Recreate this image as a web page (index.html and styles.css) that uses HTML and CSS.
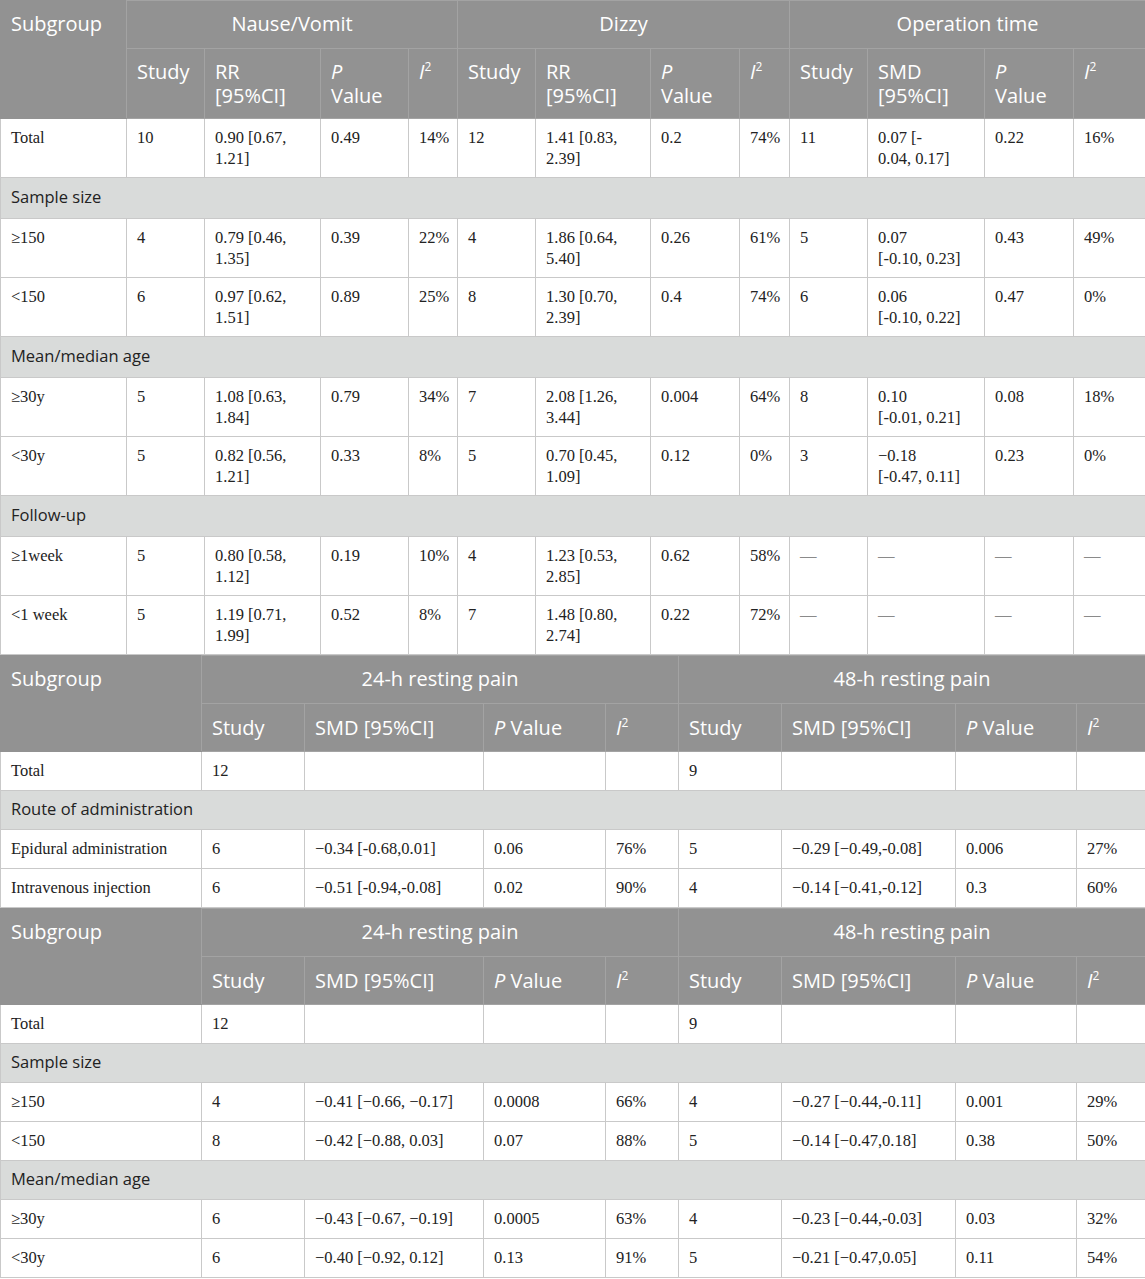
FILE: index.html
```html
<!DOCTYPE html>
<html>
<head>
<meta charset="utf-8">
<link rel="stylesheet" href="styles.css">
</head>
<body>
<table class="tbl t1">
  <colgroup>
    <col style="width:126px"><col style="width:78px"><col style="width:116px"><col style="width:88px"><col style="width:49px">
    <col style="width:78px"><col style="width:115px"><col style="width:89px"><col style="width:50px">
    <col style="width:78px"><col style="width:117px"><col style="width:89px"><col style="width:72px">
  </colgroup>
  <thead>
    <tr class="h1">
      <th rowspan="2" class="sg">Subgroup</th>
      <th colspan="4" class="grp">Nause/Vomit</th>
      <th colspan="4" class="grp">Dizzy</th>
      <th colspan="4" class="grp">Operation time</th>
    </tr>
    <tr class="h2">
      <th>Study</th><th>RR<br>[95%CI]</th><th><i>P</i><br>Value</th><th><i>I</i><sup>2</sup></th>
      <th>Study</th><th>RR<br>[95%CI]</th><th><i>P</i><br>Value</th><th><i>I</i><sup>2</sup></th>
      <th>Study</th><th>SMD<br>[95%CI]</th><th><i>P</i><br>Value</th><th><i>I</i><sup>2</sup></th>
    </tr>
  </thead>
  <tbody>
    <tr><td>Total</td><td>10</td><td>0.90 [0.67,<br>1.21]</td><td>0.49</td><td>14%</td><td>12</td><td>1.41 [0.83,<br>2.39]</td><td>0.2</td><td>74%</td><td>11</td><td>0.07 [-<br>0.04, 0.17]</td><td>0.22</td><td>16%</td></tr>
    <tr class="sec"><td colspan="13">Sample size</td></tr>
    <tr><td>≥150</td><td>4</td><td>0.79 [0.46,<br>1.35]</td><td>0.39</td><td>22%</td><td>4</td><td>1.86 [0.64,<br>5.40]</td><td>0.26</td><td>61%</td><td>5</td><td>0.07<br>[-0.10, 0.23]</td><td>0.43</td><td>49%</td></tr>
    <tr><td>&lt;150</td><td>6</td><td>0.97 [0.62,<br>1.51]</td><td>0.89</td><td>25%</td><td>8</td><td>1.30 [0.70,<br>2.39]</td><td>0.4</td><td>74%</td><td>6</td><td>0.06<br>[-0.10, 0.22]</td><td>0.47</td><td>0%</td></tr>
    <tr class="sec"><td colspan="13">Mean/median age</td></tr>
    <tr><td>≥30y</td><td>5</td><td>1.08 [0.63,<br>1.84]</td><td>0.79</td><td>34%</td><td>7</td><td>2.08 [1.26,<br>3.44]</td><td>0.004</td><td>64%</td><td>8</td><td>0.10<br>[-0.01, 0.21]</td><td>0.08</td><td>18%</td></tr>
    <tr><td>&lt;30y</td><td>5</td><td>0.82 [0.56,<br>1.21]</td><td>0.33</td><td>8%</td><td>5</td><td>0.70 [0.45,<br>1.09]</td><td>0.12</td><td>0%</td><td>3</td><td>−0.18<br>[-0.47, 0.11]</td><td>0.23</td><td>0%</td></tr>
    <tr class="sec"><td colspan="13">Follow-up</td></tr>
    <tr><td>≥1week</td><td>5</td><td>0.80 [0.58,<br>1.12]</td><td>0.19</td><td>10%</td><td>4</td><td>1.23 [0.53,<br>2.85]</td><td>0.62</td><td>58%</td><td class="na">—</td><td class="na">—</td><td class="na">—</td><td class="na">—</td></tr>
    <tr><td>&lt;1 week</td><td>5</td><td>1.19 [0.71,<br>1.99]</td><td>0.52</td><td>8%</td><td>7</td><td>1.48 [0.80,<br>2.74]</td><td>0.22</td><td>72%</td><td class="na">—</td><td class="na">—</td><td class="na">—</td><td class="na">—</td></tr>
  </tbody>
</table>

<table class="tbl t2">
  <colgroup>
    <col style="width:201px"><col style="width:103px"><col style="width:179px"><col style="width:122px"><col style="width:73px">
    <col style="width:103px"><col style="width:174px"><col style="width:121px"><col style="width:69px">
  </colgroup>
  <thead>
    <tr class="h1">
      <th rowspan="2" class="sg">Subgroup</th>
      <th colspan="4" class="grp">24-h resting pain</th>
      <th colspan="4" class="grp">48-h resting pain</th>
    </tr>
    <tr class="h2">
      <th>Study</th><th>SMD [95%CI]</th><th><i>P</i> Value</th><th><i>I</i><sup>2</sup></th>
      <th>Study</th><th>SMD [95%CI]</th><th><i>P</i> Value</th><th><i>I</i><sup>2</sup></th>
    </tr>
  </thead>
  <tbody>
    <tr><td>Total</td><td>12</td><td></td><td></td><td></td><td>9</td><td></td><td></td><td></td></tr>
    <tr class="sec"><td colspan="9">Route of administration</td></tr>
    <tr><td>Epidural administration</td><td>6</td><td>−0.34 [-0.68,0.01]</td><td>0.06</td><td>76%</td><td>5</td><td>−0.29 [−0.49,-0.08]</td><td>0.006</td><td>27%</td></tr>
    <tr><td>Intravenous injection</td><td>6</td><td>−0.51 [-0.94,-0.08]</td><td>0.02</td><td>90%</td><td>4</td><td>−0.14 [−0.41,-0.12]</td><td>0.3</td><td>60%</td></tr>
  </tbody>
</table>

<table class="tbl t2">
  <colgroup>
    <col style="width:201px"><col style="width:103px"><col style="width:179px"><col style="width:122px"><col style="width:73px">
    <col style="width:103px"><col style="width:174px"><col style="width:121px"><col style="width:69px">
  </colgroup>
  <thead>
    <tr class="h1">
      <th rowspan="2" class="sg">Subgroup</th>
      <th colspan="4" class="grp">24-h resting pain</th>
      <th colspan="4" class="grp">48-h resting pain</th>
    </tr>
    <tr class="h2">
      <th>Study</th><th>SMD [95%CI]</th><th><i>P</i> Value</th><th><i>I</i><sup>2</sup></th>
      <th>Study</th><th>SMD [95%CI]</th><th><i>P</i> Value</th><th><i>I</i><sup>2</sup></th>
    </tr>
  </thead>
  <tbody>
    <tr><td>Total</td><td>12</td><td></td><td></td><td></td><td>9</td><td></td><td></td><td></td></tr>
    <tr class="sec"><td colspan="9">Sample size</td></tr>
    <tr><td>≥150</td><td>4</td><td>−0.41 [−0.66, −0.17]</td><td>0.0008</td><td>66%</td><td>4</td><td>−0.27 [−0.44,-0.11]</td><td>0.001</td><td>29%</td></tr>
    <tr><td>&lt;150</td><td>8</td><td>−0.42 [−0.88, 0.03]</td><td>0.07</td><td>88%</td><td>5</td><td>−0.14 [−0.47,0.18]</td><td>0.38</td><td>50%</td></tr>
    <tr class="sec"><td colspan="9">Mean/median age</td></tr>
    <tr><td>≥30y</td><td>6</td><td>−0.43 [−0.67, −0.19]</td><td>0.0005</td><td>63%</td><td>4</td><td>−0.23 [−0.44,-0.03]</td><td>0.03</td><td>32%</td></tr>
    <tr><td>&lt;30y</td><td>6</td><td>−0.40 [−0.92, 0.12]</td><td>0.13</td><td>91%</td><td>5</td><td>−0.21 [−0.47,0.05]</td><td>0.11</td><td>54%</td></tr>
  </tbody>
</table>
</body>
</html>
```

FILE: styles.css
```css
html, body {
  margin: 0;
  padding: 0;
  background: #ffffff;
}

.tbl {
  width: 1145px;
  border-collapse: collapse;
  table-layout: fixed;
}

.tbl th {
  background: #929292;
  color: #ffffff;
  font-family: "Open Sans", "Noto Sans", sans-serif;
  font-weight: 400;
  font-size: 20px;
  line-height: 24px;
  text-align: left;
  vertical-align: top;
  padding: 12px 10px 11px 10px;
  border: 1px solid #a3a3a3;
}

.tbl .h1 th {
  padding-top: 11px;
  padding-bottom: 12px;
}

.t1 .h2 th {
  padding-top: 11px;
  padding-bottom: 10px;
}

.tbl th.grp {
  text-align: center;
}

.tbl th.sg {
  border-color: #929292 #a3a3a3 #929292 #929292;
}

.tbl th sup {
  font-size: 12px;
  line-height: 0;
  vertical-align: 8px;
}

.tbl td {
  font-family: "Liberation Serif", "Times New Roman", serif;
  font-size: 16.5px;
  line-height: 21px;
  color: #222222;
  text-align: left;
  vertical-align: top;
  padding: 8px 10px 9px 10px;
  border: 1px solid #c9c9c9;
}

.t1 td {
  padding-bottom: 8px;
}

.tbl .sec td {
  background: #d9dbda;
  font-family: "Open Sans", "Noto Sans", sans-serif;
  font-size: 16.5px;
  line-height: 24px;
  color: #222222;
  padding: 7px 10px 9px 10px;
}

.t2 .sec td {
  padding: 6px 10px 8px 10px;
}

.tbl td.na {
  color: #8a8a8a;
}
```
